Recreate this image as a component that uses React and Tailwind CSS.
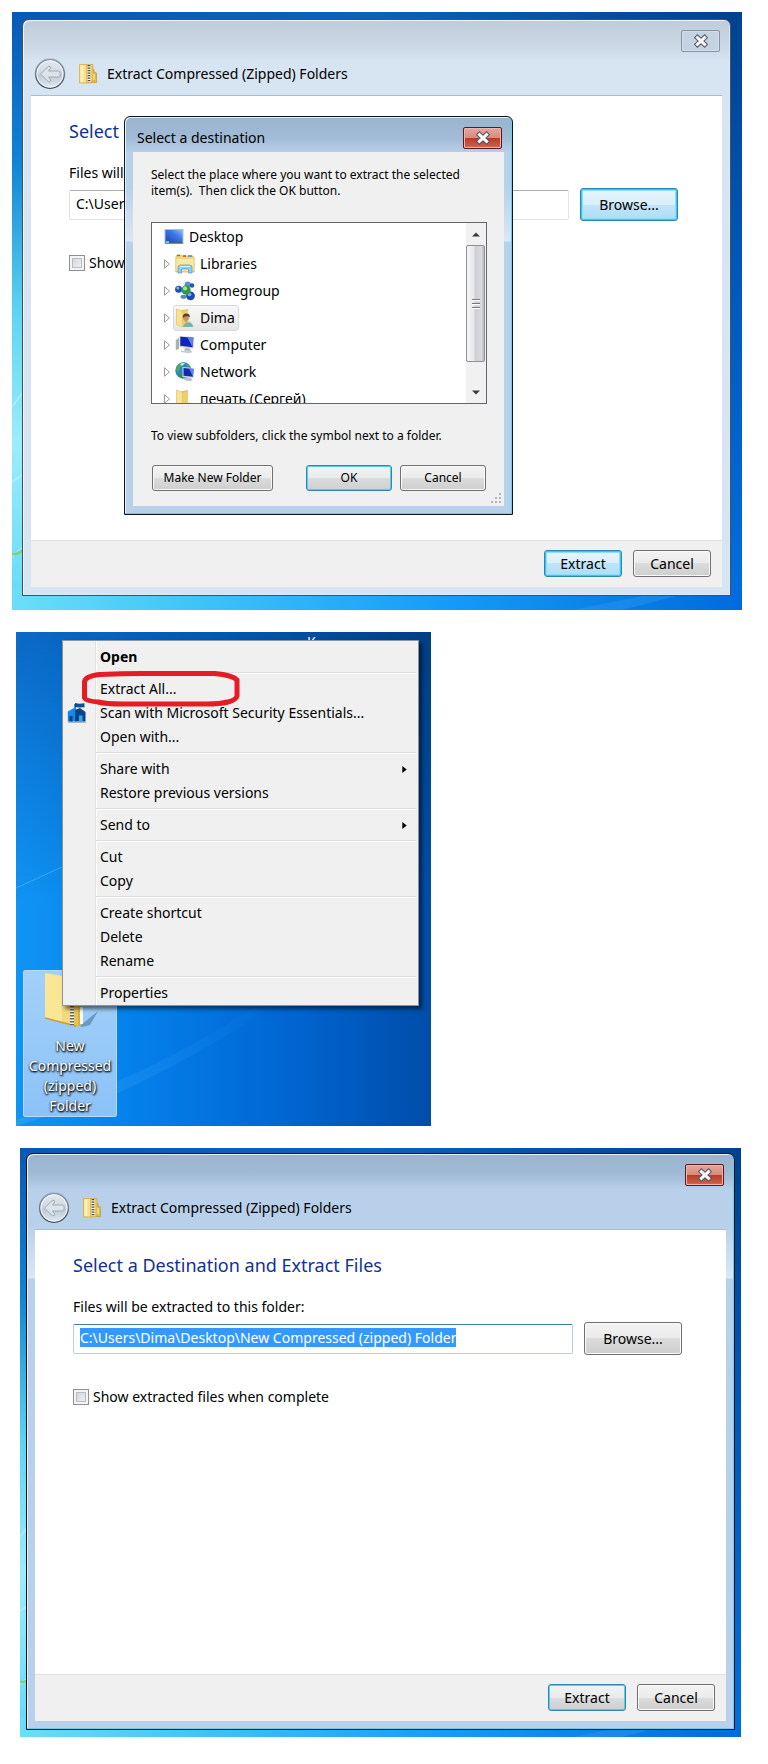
import { useEffect, useRef } from 'react';

const PATH = 'C:\\Users\\Dima\\Desktop\\New Compressed (zipped) Folder';

const BUTTON_STYLES = {
  normal:
    'border-[#707070] bg-[linear-gradient(#f3f3f3,#ebebeb_50%,#dcdcdc_50%,#cecece)] shadow-[inset_0_0_0_1px_#fafafa]',
  focused:
    'border-[#2f86b5] bg-[linear-gradient(#f1f3f4,#e9ebec_50%,#dadcdd_50%,#cdcfd0)] shadow-[inset_0_0_0_1px_#55cdf0]',
  hot:
    'border-[#2b87b4] bg-[linear-gradient(#e9f6fd,#d8effb_50%,#c0e5fa_50%,#aedcf6)] shadow-[inset_0_0_0_1px_#3cc6f1,inset_0_0_0_2px_#8fdef7]',
};

function Button({ look = 'normal', size, children }) {
  return (
    <button type="button" className={`shrink-0 rounded-[3px] border text-center text-black ${BUTTON_STYLES[look]} ${size}`}>
      {children}
    </button>
  );
}

function CloseButton({ active }) {
  const look = active
    ? 'border-[#5a1a1c] bg-[linear-gradient(#e5a79c,#da8a7d_48%,#b83c22_50%,#cb5b49_90%,#d9796a)] shadow-[inset_0_0_0_1px_#eab5ac]'
    : 'border-[#8492a9] bg-[#c5d2e1] shadow-[inset_0_0_0_1px_#d3deea]';
  return (
    <button type="button" aria-label="Close" className={`flex h-[22px] w-[39px] shrink-0 items-center justify-center rounded-[2px] border ${look}`}>
      <svg viewBox="0 0 16 14" className="h-3.5 w-4" fill="none" strokeLinecap="square">
        <path d="M4.4 3.6 11.6 10.4M11.6 3.6 4.4 10.4" stroke="#4e5566" strokeWidth="5" />
        <path d="M4.4 3.6 11.6 10.4M11.6 3.6 4.4 10.4" stroke="#fafafa" strokeWidth="3" />
      </svg>
    </button>
  );
}

function BackIcon() {
  return (
    <svg viewBox="0 0 32 32" className="size-8" fill="none">
      <defs>
        <linearGradient id="back-fill" x1="0" y1="0" x2="0" y2="1">
          <stop offset="0" stopColor="#e3e9ef" />
          <stop offset=".46" stopColor="#d0d9e2" />
          <stop offset=".54" stopColor="#bccad8" />
          <stop offset="1" stopColor="#e2eaf3" />
        </linearGradient>
        <linearGradient id="back-ring" x1="0" y1="0" x2="0" y2="1">
          <stop offset="0" stopColor="#8b98a8" />
          <stop offset="1" stopColor="#3f4b5a" />
        </linearGradient>
      </defs>
      <circle cx="16" cy="15.5" r="15.3" fill="#93a3b6" opacity=".6" />
      <circle cx="16" cy="16" r="14.3" fill="url(#back-fill)" stroke="url(#back-ring)" strokeWidth="1.3" />
      <circle cx="16" cy="16" r="13.1" stroke="#f2f6fa" strokeWidth="1" />
      <path
        d="M6.500 16 14.500 8.300q2.200-.5 2.200 1.700L14.500 13H24.500q1.800 0 1.800 3t-1.800 3H14.500l2.200 3q0 2.200-2.200 1.700Z"
        fill="#dce3ea"
        stroke="#9eabb8"
        strokeLinejoin="round"
      />
    </svg>
  );
}

function ZipIcon() {
  return (
    <svg viewBox="0 0 18 20" className="h-5 w-[18px]">
      <path d="M12 6l3-.5V8l2.500 1v9.500H11z" fill="#e0b94a" stroke="#b98f2c" strokeWidth=".6" />
      <path d="M.5.5H8V19H.5z" fill="#f6e08a" stroke="#d3af45" strokeWidth=".8" />
      <path d="M1.500 1.500h3V18h-3z" fill="#fbefb4" />
      <path d="M8 .5h6V16l-1.500 3H8z" fill="#edcc5c" stroke="#c9a13a" strokeWidth=".6" />
      <path d="M10 1v17" stroke="#f7f7f2" strokeWidth="3" />
      <path d="M10 1v17" stroke="#4c4c50" strokeWidth="2.600" strokeDasharray="1.300 1.200" />
      <path d="M15 10v6" stroke="#fff3c0" strokeWidth="1" />
    </svg>
  );
}

function Wallpaper() {
  return (
    <svg className="absolute inset-0 h-full w-full" viewBox="0 0 730 598" preserveAspectRatio="none" aria-hidden="true">
      <defs>
        <linearGradient id="wp-top">
          <stop offset="0" stopColor="#0a58b6" />
          <stop offset=".5" stopColor="#0b62bb" />
          <stop offset="1" stopColor="#00428f" />
        </linearGradient>
        <linearGradient id="wp-left" x1="0" y1="0" x2="0" y2="1">
          <stop offset="0" stopColor="#0a58b6" />
          <stop offset=".25" stopColor="#0f84d6" />
          <stop offset=".5" stopColor="#5cd5f2" />
          <stop offset=".72" stopColor="#9bedfb" />
          <stop offset="1" stopColor="#62d9f7" />
        </linearGradient>
        <linearGradient id="wp-right" x1="0" y1="0" x2="0" y2="1">
          <stop offset="0" stopColor="#00428f" />
          <stop offset=".45" stopColor="#0058bd" />
          <stop offset="1" stopColor="#006fe0" />
        </linearGradient>
        <linearGradient id="wp-bottom">
          <stop offset="0" stopColor="#6cdef8" />
          <stop offset=".25" stopColor="#3fc4f8" />
          <stop offset=".6" stopColor="#149bf7" />
          <stop offset="1" stopColor="#006bdd" />
        </linearGradient>
      </defs>
      <path d="M0 0h730v20H0z" fill="url(#wp-top)" />
      <path d="M0 0h20v598H0z" fill="url(#wp-left)" />
      <path d="M710 0h20v598h-20z" fill="url(#wp-right)" />
      <path d="M0 578h730v20H0z" fill="url(#wp-bottom)" />
      <path d="M0 395 20 368M0 470l20-14M0 545l20-18" stroke="#d3f8fe" strokeWidth="1.500" opacity=".5" />
      <path d="M0 542q6 1 12-5" stroke="#7ed278" strokeWidth="2.500" fill="none" />
      <path d="M560 598l90-18h30l-70 18z" fill="#4aa8f5" opacity=".25" />
    </svg>
  );
}

const FRAMES = {
  active:
    'border-[#10151c] bg-[linear-gradient(#9ab3ce,#a1bad5_20px,#b9d0ea_36px,#b9d0ea_70px,#dae7f5_124px,#b9d0ea_125px)] shadow-[inset_-1px_-1px_0_#5fd3ee,inset_1px_1px_0_#e8f1fa]',
  inactive:
    'border-[#48505a] bg-[linear-gradient(#c0ccda,#c8d4e0_20px,#d7e4f1_42px)] shadow-[inset_-1px_-1px_0_#dcebf8,inset_1px_1px_0_#f0f5fa]',
};

function ExtractWizard({ id, active }) {
  const pathRef = useRef(null);

  useEffect(() => {
    if (!active) return;
    pathRef.current.focus({ preventScroll: true });
    pathRef.current.select();
  }, [active]);

  return (
    <div className={`relative rounded-t-[7px] border ${active ? FRAMES.active : FRAMES.inactive}`}>
      <header className="pb-[5px] pl-[11px] pr-2.5 pt-2.5">
        <div className="flex justify-end">
          <CloseButton active={active} />
        </div>
        <div className="mt-1.5 flex items-center">
          <button type="button" aria-label="Back" className="mr-[13px]">
            <BackIcon />
          </button>
          <ZipIcon />
          <span className="ml-2.5">Extract Compressed (Zipped) Folders</span>
        </div>
      </header>

      <form className="mx-2 mb-2 border-t border-[#a9bdd2] bg-white" onSubmit={(event) => event.preventDefault()}>
        <div className="min-h-[444px] pl-[38px] pr-11 pt-[21px]">
          <h2 className="text-lg leading-7 text-[#0f3391]">Select a Destination and Extract Files</h2>
          <label htmlFor={`${id}-path`} className="mt-[18px] block">
            Files will be extracted to this folder:
          </label>
          <div className="mt-[5px] flex items-center gap-[11px]">
            <input
              id={`${id}-path`}
              ref={pathRef}
              type="text"
              defaultValue={PATH}
              className={`h-[30px] min-w-0 flex-1 rounded-[2px] border px-1.5 pb-0.5 outline-none selection:bg-[#3399ff] selection:text-white ${
                active ? 'border-[#b5cfe7] border-t-[#3d7bad]' : 'border-[#e2e3ea] border-t-[#abadb3]'
              }`}
            />
            <Button look={active ? 'normal' : 'hot'} size="h-[33px] w-[98px]">
              Browse...
            </Button>
          </div>
          <div className="mt-8 flex items-center gap-1">
            <input
              id={`${id}-show`}
              type="checkbox"
              className="size-4 appearance-none border border-[#8e8f8f] bg-[linear-gradient(135deg,#cbcfd5,#f6f6f6)] shadow-[inset_0_0_0_2px_#f4f4f4,inset_0_0_0_3px_#b9bdc3]"
            />
            <label htmlFor={`${id}-show`}>Show extracted files when complete</label>
          </div>
        </div>
        <footer className="flex justify-end gap-[11px] border-t border-[#dfdfdf] bg-[#f0f0f0] pb-2.5 pr-[11px] pt-[9px]">
          <Button look={active ? 'focused' : 'hot'} size="h-[27px] w-[78px]">
            Extract
          </Button>
          <Button size="h-[27px] w-[78px]">Cancel</Button>
        </footer>
      </form>
    </div>
  );
}

function DesktopIcon() {
  return (
    <svg viewBox="0 0 20 20" className="size-5">
      <defs>
        <linearGradient id="screen" x1="0" y1="1" x2="1" y2="0">
          <stop offset="0" stopColor="#1d49b4" />
          <stop offset=".6" stopColor="#3f78e6" />
          <stop offset="1" stopColor="#8fc0fa" />
        </linearGradient>
      </defs>
      <path d="M.5 2h19v15H.5z" fill="#a8bfdc" />
      <path d="M1.500 3h17v12h-17z" fill="url(#screen)" />
      <path d="M1.500 15h17v1.500h-17z" fill="#3a5f95" />
      <path d="M2 14h3v2H2z" fill="#7fc4b0" />
    </svg>
  );
}

function LibrariesIcon() {
  return (
    <svg viewBox="0 0 20 20" className="size-5">
      <path d="M.8 3 2 1h4l1 1h11l1.200 2v14H.8z" fill="#f0d77c" stroke="#d8b451" strokeWidth=".7" />
      <path d="M2 1.500h3" stroke="#3fa34a" strokeWidth="1.500" />
      <path d="M8 2h3" stroke="#d8433a" strokeWidth="1.500" />
      <path d="M13 2h4" stroke="#3c8fd0" strokeWidth="1.500" />
      <path d="M1.500 5h17v12h-17z" fill="#fae9a2" />
      <path d="M3 19V13.500q0-2.500 2.500-2.500h9q2.500 0 2.500 2.500V19h-3.500v-4h-7v4z" fill="#8fd0ee" stroke="#4fa5cf" strokeWidth=".8" />
      <path d="M5 12.500h10" stroke="#d4f0fb" strokeWidth="1" />
    </svg>
  );
}

function HomegroupIcon() {
  return (
    <svg viewBox="0 0 20 20" className="size-5">
      <path d="M4 8 11 10 16 15M13 4l-2 6" stroke="#9eb6cf" strokeWidth="1.500" />
      <circle cx="12.800" cy="3.600" r="3.200" fill="#5d93d6" />
      <circle cx="17" cy="4.500" r="2.300" fill="#2457ad" />
      <circle cx="3.600" cy="8.200" r="3.500" fill="#1c4fb4" />
      <circle cx="2.900" cy="7" r="1.500" fill="#7fb0f0" />
      <ellipse cx="8.500" cy="15.800" rx="3" ry="2" fill="#5b84c9" />
      <circle cx="15.500" cy="14.800" r="4.400" fill="#1d4aac" />
      <circle cx="14.500" cy="13.400" r="1.900" fill="#7ea9ee" />
      <circle cx="11" cy="9" r="4.700" fill="#2f9a45" />
      <circle cx="10" cy="7.400" r="2.100" fill="#a5e39b" />
    </svg>
  );
}

function FolderShape() {
  return (
    <>
      <path d="M13 17l6 1.500-5-6z" fill="#9aa0a8" opacity=".5" />
      <path d="M6 2.500 13 1v14l-7 3z" fill="#e3bd55" />
      <path d="M1.500 1 7.500 3.500V19l-6-2.500z" fill="#f7e391" stroke="#dcb957" strokeWidth=".6" />
      <path d="M7.500 3.500l5.500-1.500V16l-5.500 3z" fill="#edcf6d" />
    </>
  );
}

function FolderIcon() {
  return (
    <svg viewBox="0 0 20 20" className="size-5">
      <FolderShape />
    </svg>
  );
}

function UserFolderIcon() {
  return (
    <svg viewBox="0 0 20 20" className="size-5">
      <FolderShape />
      <path d="M8 19q.5-4 5-4.500t5 4.500z" fill="#6fb8a2" />
      <circle cx="11" cy="10" r="2.900" fill="#c98f63" />
      <path d="M7.800 10q-.5-4.500 3.500-4.500t3.500 4q-1-1.500-3.500-1.300T7.800 10z" fill="#5c4030" />
      <path d="M9.500 13l2 3.500 2-3z" fill="#d9a57b" />
    </svg>
  );
}

function ComputerIcon() {
  return (
    <svg viewBox="0 0 20 20" className="size-5">
      <path d="M.8 5 4 3v11l-3.200 1z" fill="#a9b3ab" />
      <path d="M4.500 1l14.700 1-.8 11.500L4.500 12z" fill="#c8ced8" />
      <path d="M5.300 1.800 18.300 2.800 17.600 12.300 5.300 10.800z" fill="#1224b8" />
      <path d="M12.500 2.400l5.800.4-.7 9.500z" fill="#5f84ee" />
      <path d="M10 13l5 .5 1 2.500-7-.5z" fill="#aeb6c2" />
      <path d="M6 15.500l11 .5v1.500l-4 .8-7-1.300z" fill="#c9ced6" />
    </svg>
  );
}

function NetworkIcon() {
  return (
    <svg viewBox="0 0 20 20" className="size-5">
      <circle cx="8.500" cy="8.500" r="8.200" fill="#2c86c6" />
      <path d="M2 4q4-4 8-3.500L8 4 5 5.500 3.500 10 1 8.500zM10 1l5 3-2 1.500z" fill="#4cab58" />
      <path d="M5 2q3-1.500 5-1L7 4z" fill="#c7eefb" />
      <path d="M3 13q2-2 4-.5l1 4Q4.500 16 3 13z" fill="#37904a" />
      <path d="M7.500 5 19.500 6l-.7 10L7.500 15z" fill="#d2d8e0" />
      <path d="M8.500 6 18.500 7l-.6 7.800L8.500 13.800z" fill="#1326b6" />
      <path d="M14 6.500l4.500.5-.6 7.600z" fill="#5f84ee" />
      <path d="M10 15.500l6 .5 1.500 2.500-4 .8-5-1.800z" fill="#b9c0ca" />
    </svg>
  );
}

const FOLDERS = [
  { name: 'Libraries', icon: <LibrariesIcon /> },
  { name: 'Homegroup', icon: <HomegroupIcon /> },
  { name: 'Dima', icon: <UserFolderIcon />, selected: true },
  { name: 'Computer', icon: <ComputerIcon /> },
  { name: 'Network', icon: <NetworkIcon /> },
  { name: 'печать (Сергей)', icon: <FolderIcon /> },
];

function GripLine() {
  return <span className="h-0.5 w-2 border-b border-white bg-[#77777b]" />;
}

function FolderTree() {
  return (
    <div className="mt-[23px] flex h-[182px] overflow-hidden border border-[#64666b] bg-white font-['Noto_Sans',sans-serif] text-sm">
      <ul className="flex-1">
        <li className="flex h-[27px] items-center gap-[5px] pl-3">
          <DesktopIcon />
          Desktop
        </li>
        {FOLDERS.map((folder) => (
          <li key={folder.name} className="flex h-[27px] items-center pl-[11px]">
            <button type="button" aria-label={`Expand ${folder.name}`}>
              <svg viewBox="0 0 8 10" className="h-2.5 w-2" fill="#fff" stroke="#9a9a9a">
                <path d="M1.500.8 6.500 5 1.500 9.200z" />
              </svg>
            </button>
            <span
              className={`ml-0.5 flex h-[26px] items-center gap-[5px] rounded-[3px] border pl-px pr-[3px] ${
                folder.selected ? 'border-[#d9d9d9] bg-[linear-gradient(#f8f8f8,#e6e6e6)]' : 'border-transparent'
              }`}
            >
              {folder.icon}
              {folder.name}
            </span>
          </li>
        ))}
      </ul>
      <div className="flex w-5 flex-col bg-[#f1f1f1]">
        <button type="button" aria-label="Scroll up" className="flex h-[22px] items-center justify-center">
          <svg viewBox="0 0 10 6" className="h-[5px] w-2" fill="#3c3c3c">
            <path d="M0 5.500 5 .5l5 5z" />
          </svg>
        </button>
        <div className="mr-px flex h-[117px] flex-col items-center justify-center gap-0.5 rounded-[2px] border border-[#8f8f95] bg-[linear-gradient(90deg,#f7f7f7,#e6e7e9_40%,#cfd0d4_50%,#d9dadd_85%,#b5b6ba)]">
          <GripLine />
          <GripLine />
          <GripLine />
        </div>
        <button type="button" aria-label="Scroll down" className="mt-auto flex h-[22px] items-center justify-center">
          <svg viewBox="0 0 10 6" className="h-[5px] w-2" fill="#3c3c3c">
            <path d="M0 .5h10l-5 5z" />
          </svg>
        </button>
      </div>
    </div>
  );
}

function DestinationDialog() {
  return (
    <div
      role="dialog"
      aria-labelledby="destination-title"
      className={`absolute left-28 top-[104px] w-[389px] rounded-t-[6px] border ${FRAMES.active}`}
    >
      <header className="flex items-center justify-between pb-[3px] pl-3 pr-2.5 pt-2.5">
        <h2 id="destination-title">Select a destination</h2>
        <CloseButton active />
      </header>
      <div className="relative mx-2 mb-2 bg-[#f0f0f0] pb-[15px] pl-[18px] pr-[17px] pt-[15px] font-['Noto_Sans',sans-serif] text-xs leading-4">
        <p className="whitespace-pre-line">
          {'Select the place where you want to extract the selected\nitem(s).\u00a0 Then click the OK button.'}
        </p>
        <FolderTree />
        <p className="mt-6">To view subfolders, click the symbol next to a folder.</p>
        <div className="mt-[21px] flex gap-2 px-px">
          <Button size="mr-auto h-[26px] w-[121px]">Make New Folder</Button>
          <Button look="focused" size="h-[26px] w-[86px]">
            OK
          </Button>
          <Button size="h-[26px] w-[86px]">Cancel</Button>
        </div>
        <svg viewBox="0 0 12 12" className="absolute bottom-0.5 right-0.5 size-3" fill="#b4b4b4" aria-hidden="true">
          <path d="M9 1h2v2H9zM5 5h2v2H5zM9 5h2v2H9zM1 9h2v2H1zM5 9h2v2H5zM9 9h2v2H9z" />
        </svg>
      </div>
    </div>
  );
}

function SecurityIcon() {
  return (
    <svg viewBox="0 0 20 20" className="size-5">
      <path d="M8 0l4 .8 5.500-.5v4L12 4.500 8 4z" fill="#0b4f94" />
      <path d="M8 1v7" stroke="#0a3d78" strokeWidth="1.200" />
      <path d="M.8 8.500 7 5l3 2v11.500H.8z" fill="#0d8ceb" />
      <path d="M8 7 13 5l5.500 4v9.500H8z" fill="#0b4288" />
      <path d="M2.500 13h3v5.500h-3z" fill="#06407f" />
      <path d="M12 12.500h3.500v6H12z" fill="#38a3f3" />
      <path d="M1 19.200h18" stroke="#7e9cba" strokeWidth="1" />
    </svg>
  );
}

const MENU = [
  [{ label: 'Open', bold: true }],
  [
    { label: 'Extract All...', circled: true },
    { label: 'Scan with Microsoft Security Essentials...', icon: <SecurityIcon /> },
    { label: 'Open with...' },
  ],
  [{ label: 'Share with', submenu: true }, { label: 'Restore previous versions' }],
  [{ label: 'Send to', submenu: true }],
  [{ label: 'Cut' }, { label: 'Copy' }],
  [{ label: 'Create shortcut' }, { label: 'Delete' }, { label: 'Rename' }],
  [{ label: 'Properties' }],
];

function MenuItem({ item }) {
  return (
    <div className="relative">
      <button type="button" role="menuitem" className="flex h-6 w-full items-center pr-[11px] text-left">
        <span className="flex w-[37px] shrink-0 pl-1">{item.icon}</span>
        <span className={item.bold ? 'font-bold' : ''}>{item.label}</span>
        {item.submenu && (
          <svg viewBox="0 0 5 8" className="ml-auto h-[7px] w-[5px]">
            <path d="M0 0l5 4-5 4z" />
          </svg>
        )}
      </button>
      {item.circled && (
        <svg viewBox="0 0 158 36" className="absolute -top-1.5 left-[19px] h-9 w-[158px]" fill="none" aria-hidden="true">
          <path
            d="M18 3.500Q40 2.500 60 2.500H133Q150 4 155 9V25Q154 29 146 31Q138 33 125 33H40Q24 33 16 31Q4 30 2.500 27V11Q3 5 18 3.500Z"
            stroke="#e51c23"
            strokeWidth="5"
          />
        </svg>
      )}
    </div>
  );
}

function ContextMenu() {
  return (
    <div
      role="menu"
      className="relative w-[357px] border border-[#8e9299] bg-[#f0f0f0] bg-[linear-gradient(90deg,transparent_32px,#e0e1e1_32px,#e0e1e1_33px,#fff_33px,#fff_34px,transparent_34px)] pt-1 shadow-[3px_3px_4px_rgba(0,0,0,0.55)]"
    >
      {MENU.map((group, index) => (
        <div key={group[0].label}>
          {index > 0 && <div role="separator" className="my-[3px] ml-[33px] mr-0.5 h-0.5 border-b border-white bg-[#dcdcdc]" />}
          {group.map((item) => (
            <MenuItem key={item.label} item={item} />
          ))}
        </div>
      ))}
    </div>
  );
}

function DesktopWallpaper() {
  return (
    <svg className="absolute inset-0 h-full w-full" viewBox="0 0 415 494" preserveAspectRatio="none" aria-hidden="true">
      <defs>
        <linearGradient id="dw-top">
          <stop offset="0" stopColor="#0b6ac6" />
          <stop offset=".5" stopColor="#0058b2" />
          <stop offset="1" stopColor="#003f84" />
        </linearGradient>
        <linearGradient id="dw-bottom">
          <stop offset="0" stopColor="#1095f4" />
          <stop offset=".3" stopColor="#047fea" />
          <stop offset=".65" stopColor="#0066d2" />
          <stop offset="1" stopColor="#004da9" />
        </linearGradient>
        <linearGradient id="dw-fade" x1="0" y1="0" x2="0" y2="1">
          <stop offset="0" stopColor="#000" />
          <stop offset=".55" stopColor="#fff" />
        </linearGradient>
        <linearGradient id="dw-streak">
          <stop offset="0" stopColor="#4ab4fb" stopOpacity=".3" />
          <stop offset="1" stopColor="#4ab4fb" stopOpacity="0" />
        </linearGradient>
        <mask id="dw-mask">
          <path d="M0 0h415v494H0z" fill="url(#dw-fade)" />
        </mask>
      </defs>
      <path d="M0 0h415v494H0z" fill="url(#dw-top)" />
      <path d="M0 0h415v494H0z" fill="url(#dw-bottom)" mask="url(#dw-mask)" />
      <path d="M0 256 46 235" stroke="#6cc0fa" opacity=".5" />
      <path d="M0 488 100 450q70-30 140-76h14q-60 44-154 88L0 494z" fill="url(#dw-streak)" />
    </svg>
  );
}

function ZippedFolder() {
  return (
    <button
      type="button"
      className="absolute bottom-[9px] left-[7px] w-[94px] rounded-[2px] border border-[#b3dafa] bg-[linear-gradient(#a3d0f8,#8cc2f8)] text-center leading-5 text-white [text-shadow:1px_1px_2px_#000,0_1px_2px_#000]"
    >
      <svg viewBox="0 0 92 65" className="h-[65px] w-full">
        <path d="M56 55 74 40l-8 14-8 2z" fill="#5580ae" opacity=".7" />
        <path d="M50 30h7v25l-7 1z" fill="#d9b043" />
        <path d="M57.500 36v17" stroke="#f2f8fc" strokeWidth="3" />
        <path d="M21 2 46 8v46L21 47z" fill="#f3da7c" />
        <path d="M21 2 38 5v46L21 47z" fill="#fae795" />
        <path d="M21 47l31 8" stroke="#c79a35" strokeWidth="1.500" />
        <path d="M46 20v33l8 2V20z" fill="#e5c354" />
        <path d="M48 20v35" stroke="#efefef" strokeWidth="4" />
        <path d="M48 20v35" stroke="#6a665a" strokeWidth="4" strokeDasharray="1.500 1.500" />
      </svg>
      <span className="block">
        New
        <br />
        Compressed
        <br />
        (zipped)
        <br />
        Folder
      </span>
    </button>
  );
}

export default function App() {
  return (
    <main className="min-h-screen bg-white pb-[27px] pt-3 font-['Noto_Sans',sans-serif] text-sm text-black">
      <section className="relative ml-3 mr-[26px] pb-3.5 pl-2.5 pr-[11px] pt-[7px]">
        <Wallpaper />
        <ExtractWizard id="first" active={false} />
        <DestinationDialog />
      </section>

      <section className="relative ml-4 mt-[22px] w-[415px] overflow-hidden pb-[120px] pl-[46px] pt-2">
        <DesktopWallpaper />
        <span className="absolute left-[291px] top-0 leading-5 text-white">К</span>
        <ZippedFolder />
        <ContextMenu />
      </section>

      <section className="relative ml-5 mr-[27px] mt-[22px] px-1.5 pb-[7px] pt-[5px]">
        <Wallpaper />
        <ExtractWizard id="second" active />
      </section>
    </main>
  );
}
